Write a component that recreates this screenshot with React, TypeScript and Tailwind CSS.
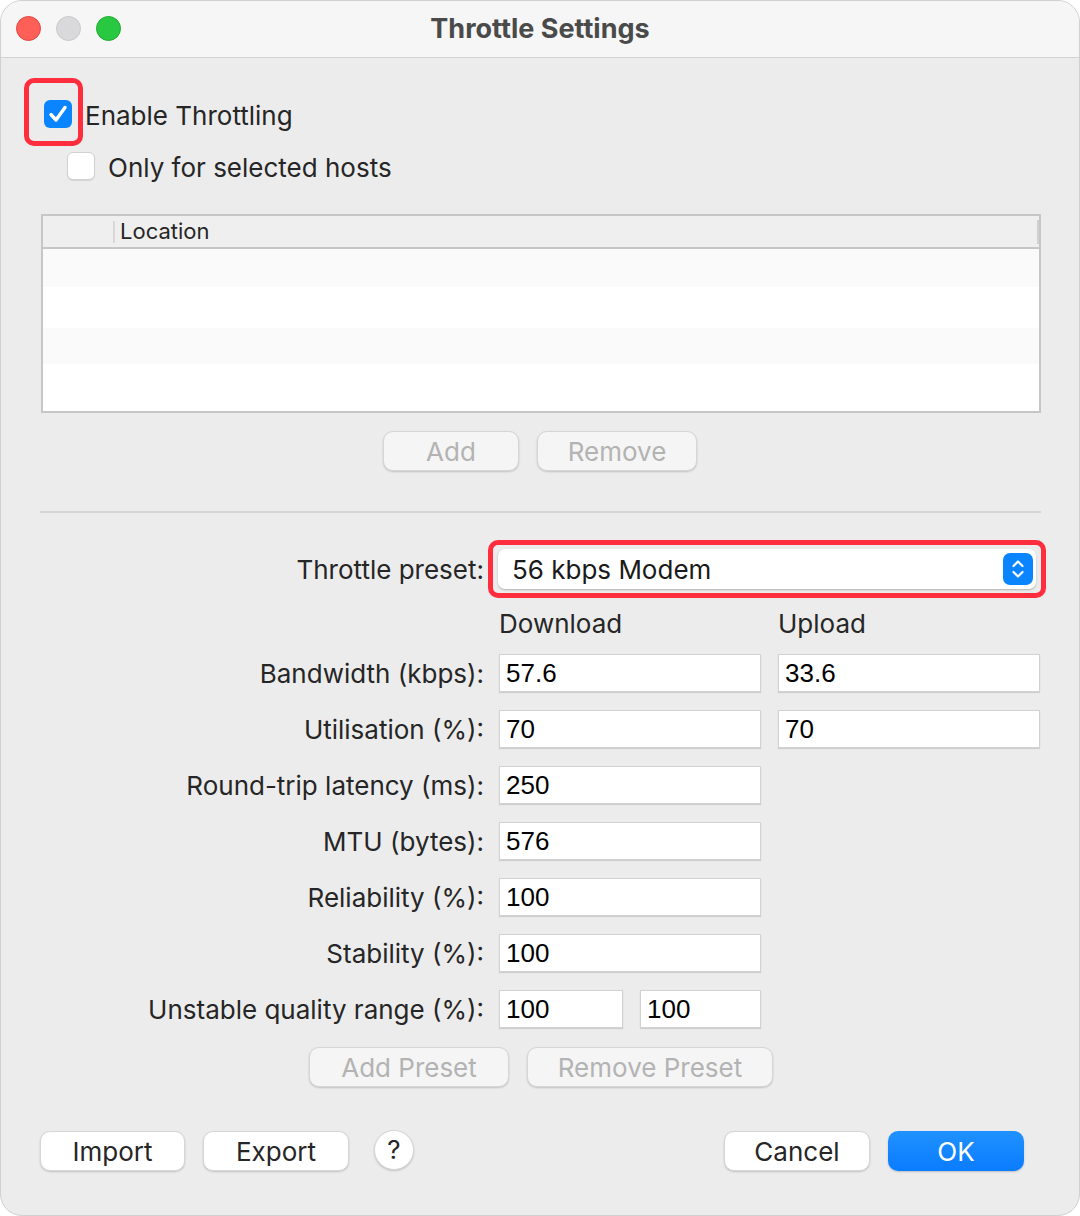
import type { ReactNode } from 'react';

const font = "font-['Inter','Liberation_Sans',sans-serif]";
const valueFont = "font-['Liberation_Sans',Arial,sans-serif]";

function MacButton({ children, width, disabled }: { children: ReactNode; width: string; disabled?: boolean }) {
    return (
        <div
            className={`${width} h-[40px] rounded-[10px] flex items-center justify-center text-[26px] border border-[#d6d6d6] shadow-[0_1px_2px_rgba(0,0,0,0.18)] ${
                disabled ? 'bg-[#f5f5f5] text-[#b3b3b3]' : 'bg-white text-[#262626]'
            }`}
        >
            {children}
        </div>
    );
}

function Field({ value, width = 'w-[262px]' }: { value: string; width?: string }) {
    return (
        <div className={`${width} h-[38px] bg-white border border-[#d2d2d2] shadow-[0_1px_1px_rgba(0,0,0,0.12)] flex items-center px-[6px] text-[26px] text-black ${valueFont}`}>
            {value}
        </div>
    );
}

function Row({ label, children }: { label: string; children: ReactNode }) {
    return (
        <div className="flex items-center h-[56px]">
            <div className="w-[444px] text-right text-[26px] text-[#262626]">{label}</div>
            <div className="ml-[15px] flex items-center gap-[17px]">{children}</div>
        </div>
    );
}

export default function App() {
    const rows = [
        { label: 'Bandwidth (kbps):', down: '57.6', up: '33.6' },
        { label: 'Utilisation (%):', down: '70', up: '70' },
        { label: 'Round-trip latency (ms):', down: '250' },
        { label: 'MTU (bytes):', down: '576' },
        { label: 'Reliability (%):', down: '100' },
        { label: 'Stability (%):', down: '100' },
    ];

    return (
        <div className={`w-[1080px] h-[1216px] bg-white ${font}`}>
            <div className="w-full h-full rounded-[22px] overflow-hidden bg-[#ececec] flex flex-col border border-[#d0d0d0]">
                {/* Title bar */}
                <div className="relative h-[57px] bg-[#f6f6f6] border-b border-[#d4d4d4] flex items-center justify-center shrink-0">
                    <div className="absolute left-[15px] top-[15px] flex gap-[15px]">
                        <div className="w-[25px] h-[25px] rounded-full bg-[#fe5f57] border border-[#e2463f]" />
                        <div className="w-[25px] h-[25px] rounded-full bg-[#d9d9db] border border-[#c8c8ca]" />
                        <div className="w-[25px] h-[25px] rounded-full bg-[#28c840] border border-[#1eab2f]" />
                    </div>
                    <span className="text-[27px] font-bold text-[#4a4a4a]">Throttle Settings</span>
                </div>

                <div className="flex flex-col px-[39px] pt-[20px]">
                    {/* Enable throttling */}
                    <div className="flex items-center -ml-[16px]">
                        <div className="w-[59px] h-[68px] border-[5px] border-[#ff2d3d] rounded-[10px] flex items-center pl-[15px]">
                            <div className="w-[28px] h-[28px] rounded-[6px] bg-[#0a84ff] flex items-center justify-center mt-[4px]">
                                <svg width="24" height="24" viewBox="0 0 24 24" fill="none">
                                    <path d="M5 12.5 L10 18 L19 5.5" stroke="white" strokeWidth="3.4" strokeLinecap="round" strokeLinejoin="round" />
                                </svg>
                            </div>
                        </div>
                        <span className="ml-[2px] text-[26px] text-[#262626] mt-[6px]">Enable Throttling</span>
                    </div>

                    <div className="flex items-center h-[28px] mt-[6px] ml-[27px]">
                        <div className="w-[28px] h-[28px] rounded-[6px] bg-white border border-[#d0d0d0] shadow-[0_1px_1px_rgba(0,0,0,0.1)]" />
                        <span className="ml-[13px] text-[26px] text-[#262626] mt-[2px]">Only for selected hosts</span>
                    </div>

                    {/* Table */}
                    <div className="mt-[34px] ml-[1px] w-[1000px] h-[199px] border-2 border-[#c6c6c6] bg-white flex flex-col">
                        <div className="h-[33px] bg-[#efefef] border-b-2 border-[#c6c6c6] flex items-center shrink-0">
                            <div className="w-[72px] h-[22px] border-r-2 border-[#d8d8d8]" />
                            <span className="ml-[5px] text-[22px] text-[#262626]">Location</span>
                            <div className="ml-auto w-[2px] h-[24px] bg-[#d0d0d0]" />
                        </div>
                        <div className="h-[38px] bg-[#fafafa]" />
                        <div className="h-[41px] bg-white" />
                        <div className="h-[36px] bg-[#fafafa]" />
                        <div className="flex-1 bg-white" />
                    </div>

                    <div className="flex justify-center gap-[18px] mt-[18px]">
                        <MacButton width="w-[136px]" disabled>Add</MacButton>
                        <MacButton width="w-[160px]" disabled>Remove</MacButton>
                    </div>

                    <div className="mt-[40px] h-[2px] bg-[#d6d6d6] w-[1001px]" />

                    {/* Preset */}
                    <div className="flex items-center mt-[27px]">
                        <div className="w-[444px] shrink-0 text-right text-[26px] text-[#262626]">Throttle preset:</div>
                        <div className="ml-[4px] shrink-0 w-[558px] h-[58px] border-[5px] border-[#ff2d3d] rounded-[10px] flex items-center px-[5px]">
                            <div className="w-full h-[40px] bg-white rounded-[7px] shadow-[0_1px_2px_rgba(0,0,0,0.25)] flex items-center pl-[14px] pr-[3px]">
                                <span className="text-[26px] text-[#1a1a1a] flex-1">56 kbps Modem</span>
                                <div className="w-[30px] h-[32px] rounded-[7px] bg-[#0a84ff] flex items-center justify-center">
                                    <svg width="16" height="24" viewBox="0 0 16 24" fill="none">
                                        <path d="M3.5 9 L8 4.5 L12.5 9" stroke="white" strokeWidth="2.2" strokeLinecap="round" strokeLinejoin="round" />
                                        <path d="M3.5 15 L8 19.5 L12.5 15" stroke="white" strokeWidth="2.2" strokeLinecap="round" strokeLinejoin="round" />
                                    </svg>
                                </div>
                            </div>
                        </div>
                    </div>

                    <div className="flex items-center mt-[7px] h-[36px] text-[26px] text-[#262626]">
                        <div className="w-[459px]" />
                        <div className="w-[279px]">Download</div>
                        <div>Upload</div>
                    </div>

                    <div className="flex flex-col mt-[4px]">
                        {rows.map((r) => (
                            <Row key={r.label} label={r.label}>
                                <Field value={r.down} />
                                {r.up && <Field value={r.up} />}
                            </Row>
                        ))}
                        <Row label="Unstable quality range (%):">
                            <Field value="100" width="w-[124px]" />
                            <Field value="100" width="w-[121px]" />
                        </Row>
                    </div>

                    <div className="flex gap-[18px] mt-[10px] ml-[269px]">
                        <MacButton width="w-[200px]" disabled>Add Preset</MacButton>
                        <MacButton width="w-[246px]" disabled>Remove Preset</MacButton>
                    </div>

                    {/* Footer */}
                    <div className="flex items-center mt-[44px]">
                        <MacButton width="w-[145px]">Import</MacButton>
                        <div className="ml-[18px]">
                            <MacButton width="w-[146px]">Export</MacButton>
                        </div>
                        <div className="ml-[25px] -mt-[3px] w-[40px] h-[40px] rounded-full bg-white border border-[#d6d6d6] shadow-[0_1px_2px_rgba(0,0,0,0.18)] flex items-center justify-center text-[26px] text-[#262626]">
                            ?
                        </div>
                        <div className="ml-auto mr-[16px] flex gap-[18px]">
                            <MacButton width="w-[146px]">Cancel</MacButton>
                            <div className="w-[136px] h-[40px] rounded-[10px] bg-gradient-to-b from-[#1f91ff] to-[#0a7cff] text-white text-[26px] flex items-center justify-center shadow-[0_1px_2px_rgba(0,0,0,0.2)]">
                                OK
                            </div>
                        </div>
                    </div>
                </div>
            </div>
        </div>
    );
}
